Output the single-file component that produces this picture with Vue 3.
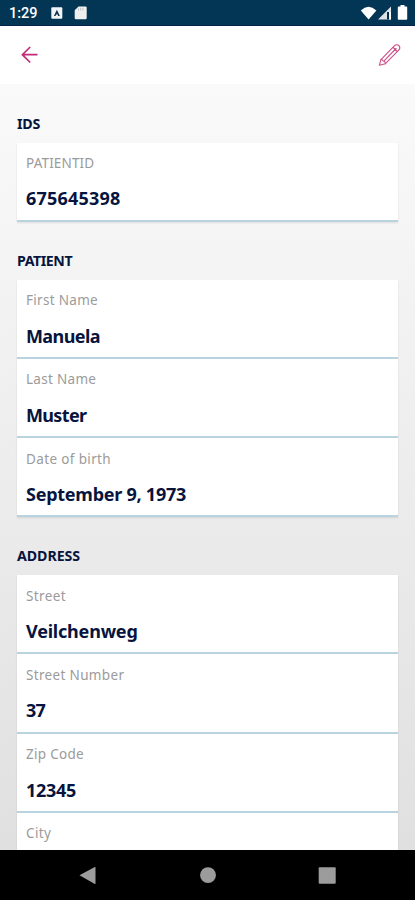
<script setup>
const sections = [
  { title: 'IDS', spacing: -0.15, fields: [{ label: 'PATIENTID', ls: 0.15, value: '675645398', vs: 0.2 }] },
  {
    title: 'PATIENT',
    spacing: -0.45,
    fields: [
      { label: 'First Name', ls: 0.3, value: 'Manuela', vs: -0.6 },
      { label: 'Last Name', ls: 0.3, value: 'Muster', vs: -0.65 },
      { label: 'Date of birth', ls: 0.36, value: 'September 9, 1973', vs: -0.25 },
    ],
  },
  {
    title: 'ADDRESS',
    spacing: -0.05,
    fields: [
      { label: 'Street', ls: 0.38, value: 'Veilchenweg', vs: -0.2 },
      { label: 'Street Number', ls: 0.34, value: '37', vs: -0.7 },
      { label: 'Zip Code', ls: 0.3, value: '12345', vs: -0.3 },
      { label: 'City', ls: 0.35, value: '', vs: 0 },
    ],
  },
]
</script>

<template>
  <div class="screen">
    <div class="status">
      <span class="time">1:29</span>
      <svg class="left-icons" width="40" height="16" viewBox="0 0 40 16">
        <rect x="1.3" y="2.2" width="11" height="11.5" rx="1" fill="#f2f5f7" />
        <path d="M3.9 11 6.9 4.8 9.9 11H8.1L7.7 9.6H6.1L5.6 11Z" fill="#14334f" />
        <path d="M28.5 1.5h7q1.2 0 1.2 1.2v10.3q0 1.2-1.2 1.2h-9.6q-1.2 0-1.2-1.2V5.3Z" fill="#f0f0f0" />
        <path d="M28.5 3.3v2.2M30.7 2.8v2.7M32.9 2.8v2.7" stroke="#b5bcc1" stroke-width=".9" />
      </svg>
      <svg class="right-icons" width="50" height="18" viewBox="0 0 50 18">
        <path d="M.8 6.4Q8.5-1 16.4 6.4L8.6 15.4Z" fill="#fff" />
        <path d="M18 15.4 31 2.4v13Z" fill="#dce4e9" />
        <path d="M27 8h2.2v7.4h-2.2Z" fill="#082d4a" />
        <path d="M29.2 8h1.8v7.4h-1.8Z" fill="#fff" />
        <path d="M40.5 1h4v1.6h1.9q.8 0 .8.8V15q0 .8-.8.8h-7.8q-.8 0-.8-.8V3.4q0-.8.8-.8h1.9Z" fill="#fff" />
      </svg>
    </div>

    <header class="toolbar">
      <svg width="18" height="18" viewBox="0 0 18 18" fill="none" stroke="#c02c77" stroke-width="1.7">
        <path d="M17.5 8.7H2.4M10.2 1 2.4 8.7l7.8 7.8" />
      </svg>
      <svg width="24" height="24" viewBox="0 0 24 24" fill="none" stroke="#cc5086" stroke-width="1.1" stroke-linejoin="round" stroke-linecap="round">
        <path d="M1.3 22.3 3 16.6 16.3 2.9q1.7-1.8 3.6-.9 2.4 1.3 1.8 3.5-.2.8-1 1.6L7.4 20.7Z" />
        <path d="M3 16.6q1.1-.4 1.6.7.1.8 1.3 1 1.6.6 1.5 2.4M6.3 17.6 18.1 5.5M15.2 4.5l4.1 4" />
      </svg>
    </header>

    <main class="content">
      <section v-for="section in sections" :key="section.title">
        <h2 :style="{ letterSpacing: section.spacing + 'px' }">{{ section.title }}</h2>
        <div class="card">
          <div v-for="field in section.fields" :key="field.label" class="field">
            <div class="label"><span :style="{ letterSpacing: field.ls + 'px' }">{{ field.label }}</span></div>
            <div class="value"><span :style="{ letterSpacing: field.vs + 'px' }">{{ field.value }}</span></div>
          </div>
        </div>
      </section>
    </main>

    <nav class="navbar">
      <svg width="415" height="50" viewBox="0 0 415 50" fill="#9c9c9c">
        <path d="M79.5 25.2 94.8 17q.7-.2.7.6v15.8q0 .8-.7.6Z" />
        <circle cx="208" cy="25.2" r="7.9" />
        <rect x="318.7" y="17.2" width="17" height="16.5" rx="1" />
      </svg>
    </nav>
  </div>
</template>

<style>
body {
  margin: 0;
  overflow: hidden;
}
</style>

<style scoped>
.screen {
  width: 415px;
  height: 900px;
  display: flex;
  flex-direction: column;
  overflow: hidden;
  font-family: "Noto Sans", sans-serif;
  background: #fff;
}
.status {
  box-sizing: border-box;
  flex: 0 0 26px;
  display: flex;
  align-items: center;
  padding: 1px 5px 0 9px;
  background: #033655;
  border-bottom: 1px solid #08214b;
}
.time {
  width: 41px;
  font: 500 14.5px/20px Roboto, sans-serif;
  color: #fff;
  padding-top: 2px;
}
.right-icons {
  margin-left: auto;
}
.toolbar {
  flex: 0 0 58px;
  display: flex;
  align-items: center;
  justify-content: space-between;
  padding: 0 13px 0 20px;
}
.content {
  flex: 1;
  min-height: 0;
  overflow: hidden;
  padding: 0.5px 17px 0;
  background: linear-gradient(#fafafa, #e0e0e0);
}
h2 {
  box-sizing: border-box;
  height: 58px;
  margin: 0;
  padding-top: 28px;
  font-size: 14.2px;
  line-height: 22px;
  font-weight: 700;
  color: #07143e;
  white-space: nowrap;
}
.card {
  background: #fff;
  box-shadow: 0 1px 2px rgba(0, 0, 0, 0.1);
}
.field {
  box-sizing: border-box;
  height: 79.2px;
  padding: 10.5px 9px 0;
  border-bottom: 2px solid #b9d3e0;
  white-space: nowrap;
}
.label {
  height: 20px;
  font-size: 13.5px;
  line-height: 20px;
  color: #9b9b9b;
}
.value {
  margin-top: 13.4px;
  height: 24px;
  font-size: 18px;
  line-height: 24px;
  font-weight: 700;
  color: #07143e;
}
.navbar {
  flex: 0 0 50px;
  background: #000;
}
.navbar svg {
  display: block;
}
</style>
